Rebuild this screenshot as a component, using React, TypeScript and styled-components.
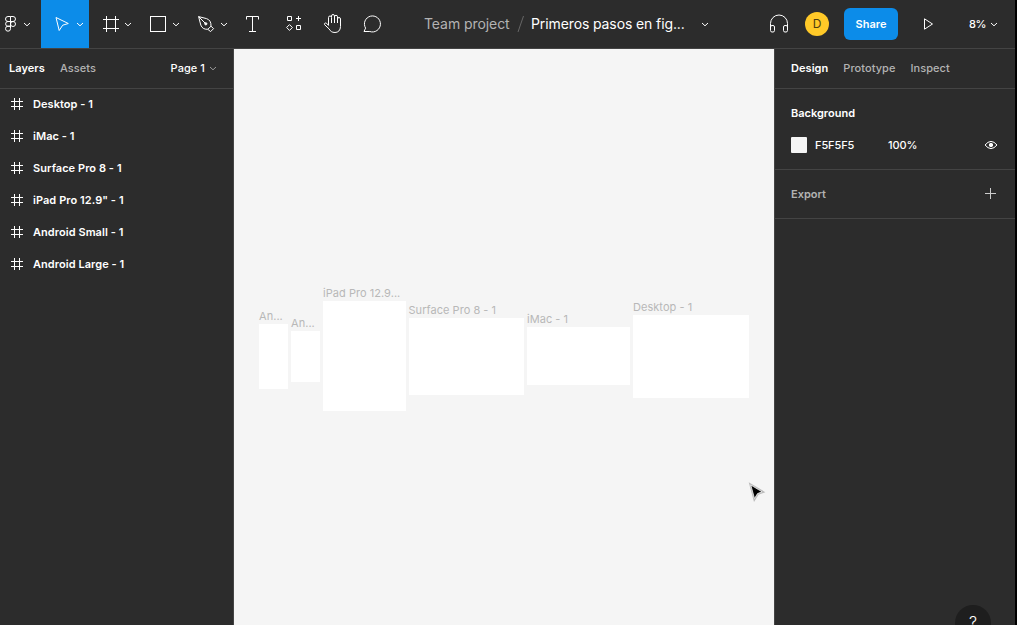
import React from "react";
import styled, { createGlobalStyle } from "styled-components";

const GlobalStyle = createGlobalStyle`
  * { box-sizing: border-box; }
  body {
    margin: 0;
    background: #000;
    overflow: hidden;
    font-family: Inter, "Liberation Sans", sans-serif;
    font-size: 11px;
    line-height: 16px;
    color: #fff;
  }
`;

const Window = styled.div`
  display: flex;
  flex-direction: column;
  width: 1015px;
  height: 625px;
  background: #2c2c2c;
  overflow: hidden;
`;

const Toolbar = styled.header`
  display: flex;
  align-items: center;
  height: 49px;
  flex: none;
  border-bottom: 1px solid #444;
`;

const ToolGroup = styled.div`
  display: flex;
  width: 393px;
  flex: none;
`;

const Tool = styled.div<{ $width: number; $active?: boolean; $start?: number }>`
  display: flex;
  align-items: center;
  gap: 1px;
  width: ${(p) => p.$width}px;
  height: 48px;
  padding-left: ${(p) => p.$start ?? 8}px;
  background: ${(p) => (p.$active ? "#0c8ce9" : "transparent")};
`;

const Icon = styled.svg`
  display: block;
  flex: none;
  fill: none;
  stroke: #fff;
  stroke-width: 1;
`;

const FileTitle = styled.div`
  display: flex;
  align-items: center;
  flex: none;
  width: 376px;
  padding-left: 31px;
  font-size: 14px;
  line-height: 24px;
  white-space: nowrap;
`;

const Project = styled.span`
  width: 93px;
  color: #b3b3b3;
  letter-spacing: -0.07px;
`;

const FileName = styled.span`
  width: 170px;
  margin-left: 6px;
  letter-spacing: -0.11px;
`;

const Actions = styled.div`
  display: flex;
  align-items: center;
  flex: 1;
`;

const Avatar = styled.div`
  width: 24px;
  height: 24px;
  margin-left: 16px;
  border-radius: 50%;
  background: #ffc928;
  color: #4c3c10;
  font-size: 12px;
  line-height: 24px;
  text-align: center;
`;

const ShareButton = styled.button`
  width: 54px;
  height: 32px;
  margin: 0 22px 0 15px;
  padding: 0;
  border: 0;
  border-radius: 6px;
  background: #0c8ce9;
  color: #fff;
  font: 600 11px/16px Inter, "Liberation Sans", sans-serif;
`;

const Zoom = styled.span`
  width: 21px;
  margin-left: 29px;
  font-weight: 500;
  letter-spacing: -0.3px;
`;

const Workspace = styled.div`
  display: flex;
  flex: 1;
  min-height: 0;
`;

const LeftPanel = styled.aside`
  width: 234px;
  flex: none;
  border-right: 1px solid #444;
`;

const RightPanel = styled.aside`
  position: relative;
  width: 241px;
  flex: none;
  border-left: 1px solid #444;
`;

const Tabs = styled.nav<{ $indent: number }>`
  display: flex;
  align-items: center;
  gap: 15px;
  height: 40px;
  padding: 0 0 1px ${(p) => p.$indent}px;
  border-bottom: 1px solid #444;
`;

const Tab = styled.span<{ $active?: boolean }>`
  font-weight: ${(p) => (p.$active ? 600 : 500)};
  color: ${(p) => (p.$active ? "#fff" : "#b3b3b3")};
  letter-spacing: 0.06px;
`;

const PagePicker = styled.span`
  display: flex;
  align-items: center;
  gap: 4px;
  margin-left: auto;
  padding-right: 16px;
  font-weight: 500;
  letter-spacing: 0.06px;
`;

const LayerList = styled.div`
  margin-top: -1px;
`;

const LayerRow = styled.div`
  display: flex;
  align-items: center;
  gap: 10px;
  height: 32px;
  padding-left: 11px;
  font-weight: 600;
  letter-spacing: 0.06px;
`;

const Canvas = styled.main`
  position: relative;
  flex: 1;
  background: #f5f5f5;
  overflow: hidden;
`;

const Frame = styled.div<{ $x: number; $y: number; $w: number; $h: number }>`
  position: absolute;
  left: ${(p) => p.$x}px;
  top: ${(p) => p.$y}px;
  width: ${(p) => p.$w}px;
  height: ${(p) => p.$h}px;
  background: #fff;
`;

const FrameLabel = styled.span`
  position: absolute;
  left: 0;
  top: -16px;
  color: #b8b8b8;
  letter-spacing: 0.04px;
  white-space: nowrap;
`;

const Pointer = styled(Icon)`
  position: absolute;
  left: 514px;
  top: 433px;
`;

const Section = styled.section<{ $height: number }>`
  height: ${(p) => p.$height}px;
  padding: 8px 16px 0;
  border-bottom: 1px solid #444;
`;

const SectionRow = styled.div`
  display: flex;
  align-items: center;
  height: 32px;
`;

const SectionTitle = styled.span<{ $muted?: boolean }>`
  font-weight: 600;
  color: ${(p) => (p.$muted ? "#b3b3b3" : "#fff")};
`;

const Swatch = styled.span`
  width: 16px;
  height: 16px;
  margin-right: 8px;
  background: #f5f5f5;
  border-radius: 1px;
`;

const Field = styled.span<{ $width: number }>`
  width: ${(p) => p.$width}px;
  font-weight: 500;
  letter-spacing: -0.1px;
`;

const RowEnd = styled.span`
  margin-left: auto;
`;

const HelpButton = styled.div`
  position: absolute;
  left: 180px;
  top: 556px;
  width: 36px;
  height: 36px;
  border-radius: 50%;
  background: #1e1e1e;
  font-size: 16px;
  font-weight: 300;
  line-height: 34px;
  text-align: center;
`;

const Chevron = ({ color = "#fff" }: { color?: string }) => (
  <Icon width="8" height="8" viewBox="0 0 8 8" style={{ stroke: color }}>
    <path d="M1 3l3 2.8L7 3" />
  </Icon>
);

const Glyph = ({ children }: { children: React.ReactNode }) => (
  <Icon width="24" height="24" viewBox="0 0 24 24">{children}</Icon>
);

const layers = [
  "Desktop - 1",
  "iMac - 1",
  "Surface Pro 8 - 1",
  'iPad Pro 12.9" - 1',
  "Android Small - 1",
  "Android Large - 1",
];

const frames = [
  { label: "An...", x: 25, y: 275, w: 29, h: 65 },
  { label: "An...", x: 57, y: 282, w: 29, h: 51 },
  { label: "iPad Pro 12.9...", x: 89, y: 252.4, w: 82.5, h: 109.6 },
  { label: "Surface Pro 8 - 1", x: 174.5, y: 269, w: 115.5, h: 77 },
  { label: "iMac - 1", x: 293, y: 278, w: 103, h: 58 },
  { label: "Desktop - 1", x: 399, y: 266.4, w: 116, h: 82.6 },
];

export default function App() {
  return (
    <>
      <GlobalStyle />
      <Window>
        <Toolbar>
          <ToolGroup>
            <Tool $width={41} $start={5}>
              <Icon width="17" height="18" viewBox="0 0 17 18">
                <path d="M5.5 1.5H3a2.5 2.5 0 0 0 0 5h5a2.5 2.5 0 0 0 0-5H5.5v12.2a2.5 2.5 0 1 1-2.5-2.5h2.5M5.5 6.5H3a2.4 2.4 0 0 0 0 4.8h2.5" />
                <circle cx="8" cy="9" r="2.5" />
              </Icon>
              <Chevron />
            </Tool>
            <Tool $width={48} $active $start={10}>
              <Glyph><path d="M5 5.5L17.3 11.5L11.7 13.2L8.2 18.5Z" strokeLinejoin="round" /></Glyph>
              <Chevron />
            </Tool>
            <Tool $width={48} $start={10}>
              <Glyph><path d="M7.5 4v16M16.5 4v16M4 7.5h16M4 16.5h16" /></Glyph>
              <Chevron />
            </Tool>
            <Tool $width={48} $start={10}>
              <Glyph><rect x="3.5" y="4.5" width="15" height="15" /></Glyph>
              <Chevron />
            </Tool>
            <Tool $width={48} $start={10}>
              <Glyph>
                <path d="M3.6 4.6L11.5 6.6C14.6 7.6 16.2 10 16 14.2L12.8 17.3C9 17.5 7 16 5.8 13.1ZM3.6 4.6L10.2 11.2M16 14.2l2.6 2.4-3 3-2.8-2.3" strokeLinejoin="round" />
                <circle cx="10.8" cy="11.8" r="1.1" fill="#fff" />
              </Glyph>
              <Chevron />
            </Tool>
            <Tool $width={40} $start={7}>
              <Glyph><path d="M6.5 7.5v-3h12v3M12.5 4.5v15M9 19.5h7" /></Glyph>
            </Tool>
            <Tool $width={40}>
              <Glyph>
                <path d="M6.5 4.5h4v4h-4zM15.5 13.5h4v4h-4zM17.5 4v5M15 6.5h5M8.5 12.6l2.9 2.9-2.9 2.9-2.9-2.9z" />
              </Glyph>
            </Tool>
            <Tool $width={40}>
              <Glyph>
                <path d="M7.5 13.5V5.5a1.5 1.5 0 0 1 3 0V11M10.5 5V4a1.5 1.5 0 0 1 3 0v7M13.5 4.8a1.5 1.5 0 0 1 3 0V11M16.5 7a1.5 1.5 0 0 1 3 0v7.5c0 3.8-2.3 6-5.5 6-3.2 0-4.6-1.3-5.8-3.5L3.5 12.6c-.6-1 .7-2.1 1.9-1.4l2.1 2.1" strokeLinejoin="round" />
              </Glyph>
            </Tool>
            <Tool $width={40}>
              <Glyph>
                <path d="M3 19.5l1.6-3.4A8 8 0 1 1 8.8 19.5z" strokeLinejoin="round" />
              </Glyph>
            </Tool>
          </ToolGroup>
          <FileTitle>
            <Project>Team project</Project>
            <Icon width="8" height="18" viewBox="0 0 8 18" style={{ stroke: "#666" }}>
              <path d="M6.5 1L1 17" />
            </Icon>
            <FileName>Primeros pasos en fig...</FileName>
            <Chevron />
          </FileTitle>
          <Actions>
            <Icon width="20" height="20" viewBox="0 0 20 20">
              <path d="M1.5 16V9.5a8 8 0 0 1 17 0V16" />
              <rect x="1.5" y="11.5" width="4" height="6.5" rx="1.5" />
              <rect x="14.5" y="11.5" width="4" height="6.5" rx="1.5" />
            </Icon>
            <Avatar>D</Avatar>
            <ShareButton>Share</ShareButton>
            <Icon width="20" height="20" viewBox="0 0 20 20">
              <path d="M4.5 4.8v10.4L12.5 10z" />
            </Icon>
            <Zoom>8%</Zoom>
            <Chevron />
          </Actions>
        </Toolbar>
        <Workspace>
          <LeftPanel>
            <Tabs $indent={9}>
              <Tab $active>Layers</Tab>
              <Tab>Assets</Tab>
              <PagePicker>Page 1 <Chevron color="#999" /></PagePicker>
            </Tabs>
            <LayerList>
              {layers.map((name) => (
                <LayerRow key={name}>
                  <Icon width="12" height="12" viewBox="0 0 12 12">
                    <path d="M3.5 0v12M8.5 0v12M0 3.5h12M0 8.5h12" />
                  </Icon>
                  {name}
                </LayerRow>
              ))}
            </LayerList>
          </LeftPanel>
          <Canvas>
            {frames.map((f, i) => (
              <Frame key={i} $x={f.x} $y={f.y} $w={f.w} $h={f.h}>
                <FrameLabel>{f.label}</FrameLabel>
              </Frame>
            ))}
            <Pointer width="20" height="22" viewBox="0 0 20 22">
              <path d="M2 2L15.5 10L10 12L6.3 18Z" stroke="#bbb" style={{ strokeWidth: 1.6, stroke: "#bbb" }} />
              <path d="M2.8 3L14 9.8L9.5 11.6L6.5 16.5Z" fill="#000" style={{ stroke: "#fff", strokeWidth: 0.7 }} />
            </Pointer>
          </Canvas>
          <RightPanel>
            <Tabs $indent={16}>
              <Tab $active>Design</Tab>
              <Tab>Prototype</Tab>
              <Tab>Inspect</Tab>
            </Tabs>
            <Section $height={81}>
              <SectionRow><SectionTitle>Background</SectionTitle></SectionRow>
              <SectionRow>
                <Swatch />
                <Field $width={73}>F5F5F5</Field>
                <Field $width={40}>100%</Field>
                <RowEnd>
                  <Icon width="16" height="16" viewBox="0 0 16 16">
                    <path d="M2 8Q8 .8 14 8Q8 15.2 2 8Z" />
                    <circle cx="8" cy="8" r="1.7" fill="#fff" />
                  </Icon>
                </RowEnd>
              </SectionRow>
            </Section>
            <Section $height={49}>
              <SectionRow>
                <SectionTitle $muted>Export</SectionTitle>
                <RowEnd>
                  <Icon width="16" height="16" viewBox="0 0 16 16" style={{ stroke: "#ccc" }}>
                    <path d="M7.5 2v11M2 7.5h11" />
                  </Icon>
                </RowEnd>
              </SectionRow>
            </Section>
            <HelpButton>?</HelpButton>
          </RightPanel>
        </Workspace>
      </Window>
    </>
  );
}
